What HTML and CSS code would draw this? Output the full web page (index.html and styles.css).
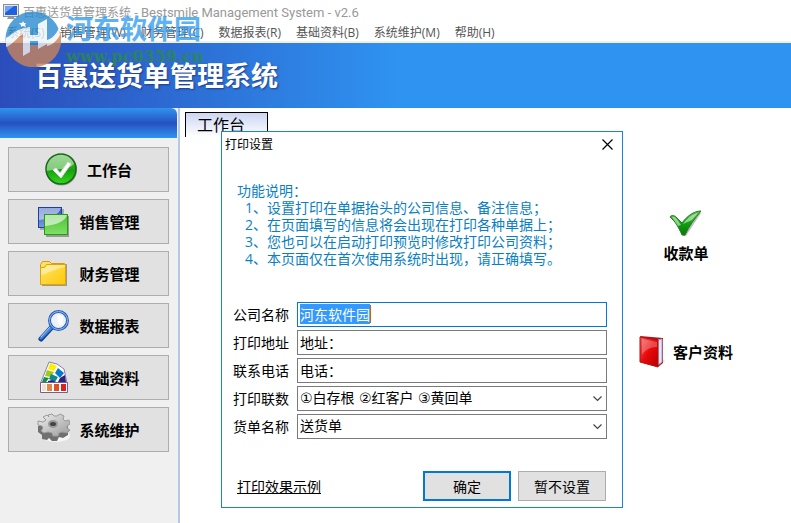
FILE: index.html
```html
<!DOCTYPE html>
<html lang="zh-CN">
<head>
    <meta charset="UTF-8">
    <meta name="viewport" content="width=device-width, initial-scale=1.0">
    <title>百惠送货单管理系统</title>
    <link rel="stylesheet" href="styles.css">
</head>
<body>

    <header class="titlebar">
        <svg class="app-icon" width="16" height="16" viewBox="0 0 16 16">
            <rect x="0.5" y="0.5" width="15" height="12" fill="#e8e8e0" stroke="#8a8f98"/>
            <rect x="2" y="2" width="12" height="9" fill="#1f5fe0"/>
            <path d="M2 2h9L2 9z" fill="#6ea4f8"/>
            <path d="M5 13h6l1 2H4z" fill="#9a9a92"/>
        </svg>
        <span>百惠送货单管理系统 <span class="latin">- Bestsmile Management System - v2.6</span></span>
    </header>

    <nav class="menubar">
        <a href="#">系统(S)</a>
        <a href="#">销售管理(W)</a>
        <a href="#">财务管理(C)</a>
        <a href="#">数据报表(R)</a>
        <a href="#">基础资料(B)</a>
        <a href="#">系统维护(M)</a>
        <a href="#">帮助(H)</a>
    </nav>

    <div class="banner">
        <h1>百惠送货单管理系统</h1>
    </div>

    <div class="watermark">
        <svg width="56" height="56" viewBox="0 0 56 56">
            <circle cx="28" cy="28" r="27.500" fill="#2a8cd0"/>
            <path d="M1 33C9 31 11 22 18 18V34H34V32C43 33 51 27 55 20A27.500 27.500 0 0 1 2 37z" fill="#c9845c"/>
            <path d="M1 27C6 24 12 17 25 16V41L18 45V23C13 25 9 33 1 36z" fill="#fff" opacity="0.9"/>
            <path d="M33 13L42 8V33L33 38V30H25V24H33z" fill="#fff" opacity="0.9"/>
            <path d="M42 29C48 27 51 23 54 17L55 24C52 30 47 34 42 35z" fill="#fff" opacity="0.9"/>
            <path d="M18 10l1 2h2l-1 2 1 2-3-1-2 1v-2l-2-2h3z" fill="#fff"/>
        </svg>
        <div>
            <div class="watermark-name">河东软件园</div>
            <div class="watermark-url">www.pc0359.cn</div>
        </div>
    </div>

    <div class="layout">
        <aside class="sidebar">
            <div class="sidebar-head"></div>
            <div class="sidebar-buttons">
                <button class="side-btn">
                    <svg width="33" height="33" viewBox="0 0 33 33">
                        <defs>
                            <linearGradient id="ball" x1="0" y1="0" x2="0" y2="1">
                                <stop offset="0" stop-color="#56b848"/>
                                <stop offset="0.55" stop-color="#17a00f"/>
                                <stop offset="1" stop-color="#35d81c"/>
                            </linearGradient>
                        </defs>
                        <circle cx="16.500" cy="17" r="15.500" fill="#999"/>
                        <circle cx="16" cy="16" r="15" fill="url(#ball)" stroke="#176b17" stroke-width="1.500"/>
                        <path d="M2 18A14 14 0 0 1 29 11C22 18 12 15 2 18z" fill="#fff" opacity="0.45"/>
                        <path d="M8 17l3-2 4 5 8-11 3 2-10 14z" fill="#fff" stroke="#ddd"/>
                    </svg>
                    工作台
                </button>
                <button class="side-btn">
                    <svg width="33" height="33" viewBox="0 0 33 33">
                        <defs>
                            <linearGradient id="blueBox" x1="0" y1="0" x2="0" y2="1">
                                <stop offset="0" stop-color="#2a55b5"/>
                                <stop offset="1" stop-color="#7c9ce0"/>
                            </linearGradient>
                            <linearGradient id="greenBox" x1="0" y1="0" x2="0" y2="1">
                                <stop offset="0" stop-color="#4cc030"/>
                                <stop offset="1" stop-color="#80e068"/>
                            </linearGradient>
                        </defs>
                        <rect x="3" y="4" width="24" height="21" fill="#aaa"/>
                        <rect x="1.500" y="2.500" width="23" height="20" fill="url(#blueBox)" stroke="#1a3fa5"/>
                        <path d="M2 3h22C22 10 12 14 2 15z" fill="#fff" opacity="0.5"/>
                        <rect x="9" y="11" width="23" height="21" fill="#999"/>
                        <rect x="7.500" y="9.500" width="23" height="20" fill="url(#greenBox)" stroke="#259c12"/>
                        <path d="M8 10h22C28 17 18 20 8 21z" fill="#fff" opacity="0.6"/>
                    </svg>
                    销售管理
                </button>
                <button class="side-btn">
                    <svg width="33" height="33" viewBox="0 0 33 33">
                        <defs>
                            <linearGradient id="folder" x1="0" y1="0" x2="1" y2="1">
                                <stop offset="0" stop-color="#ffe470"/>
                                <stop offset="1" stop-color="#ffc800"/>
                            </linearGradient>
                        </defs>
                        <path d="M5 7h25v22H5z" fill="#9a9a9a"/>
                        <path d="M3.500 27.500v-20l2-3h7l2 2h13v21z" fill="url(#folder)" stroke="#d69c0a"/>
                        <path d="M3.500 10.500h4l2-3h19v20h-25z" fill="url(#folder)" stroke="#e0a40a"/>
                        <path d="M4 11h4l2-3h18v2C18 12 12 16 4 18z" fill="#fff" opacity="0.4"/>
                    </svg>
                    财务管理
                </button>
                <button class="side-btn">
                    <svg width="33" height="33" viewBox="0 0 33 33">
                        <path d="M15 18L4 30" stroke="#15408c" stroke-width="5" stroke-linecap="round"/>
                        <path d="M15 18L4 29" stroke="#3d86e4" stroke-width="3" stroke-linecap="round"/>
                        <path d="M13 18L4 28" stroke="#a8d0ff"/>
                        <circle cx="21.500" cy="11.500" r="9" fill="#eef2f8" stroke="#2c60b8" stroke-width="3"/>
                        <circle cx="21.500" cy="11.500" r="9" fill="none" stroke="#8cbcf8"/>
                        <path d="M20 6l6 1v9l-5-1z" fill="#fff"/>
                    </svg>
                    数据报表
                </button>
                <button class="side-btn">
                    <svg width="33" height="33" viewBox="0 0 33 33">
                        <path d="M12 1l8 2 7 5 3 14v9H4V21z" fill="#fff" stroke="#8b80ad"/>
                        <path d="M13 2l7 3-3 5-6-2z" fill="#ffee00"/>
                        <path d="M10 9l7 2-3 5-6-1z" fill="#9ccc18"/>
                        <path d="M21 7l6 5-4 5-5-5z" fill="#0878c8"/>
                        <path d="M14 13l7 3-3 5-6-3z" fill="#10888c"/>
                        <path d="M7 16l5 1-3 4H5z" fill="#0a9240"/>
                        <path d="M23 17l5-3 1 7h-8z" fill="#30207c"/>
                        <path d="M11 20l4-1 4 2h-8z" fill="#282090"/>
                        <path d="M3.500 21.500h27v10h-27z" fill="#fff" stroke="#76608c"/>
                        <path d="M5 23h4v7H5z" fill="#f8ddd0"/>
                        <path d="M10 23h5v7h-5z" fill="#e08848"/>
                        <path d="M17 23h5v7h-5z" fill="#dc5028"/>
                        <path d="M24 23h5v7h-5z" fill="#dc2020"/>
                    </svg>
                    基础资料
                </button>
                <button class="side-btn">
                    <svg width="33" height="33" viewBox="0 0 33 33">
                        <defs>
                            <linearGradient id="gear" x1="0" y1="0" x2="1" y2="1">
                                <stop offset="0" stop-color="#f0f0f0"/>
                                <stop offset="1" stop-color="#9a9a9a"/>
                            </linearGradient>
                        </defs>
                        <ellipse cx="19" cy="23" rx="14" ry="6" fill="#fff" opacity="0.7"/>
                        <path d="M1 13v6l4 3v4l5 1 2-2 3 3h5l2-4 4 1 5-3v-9z" fill="#707070"/>
                        <path d="M12 4l-1-2 4-1 2 2h3l3-2 4 2-1 3 2 2 4-1 1 4-3 2v2l3 2-3 3-5-1-3 1-1 3h-5l-1-3-4-1-4 1-3-2 2-3-1-2-4-1V8l5 1 3-2-3-3 4-2z" fill="url(#gear)" stroke="#999"/>
                        <ellipse cx="16" cy="11" rx="4" ry="3" fill="#444" stroke="#999" stroke-width="2"/>
                    </svg>
                    系统维护
                </button>
            </div>
        </aside>

        <main class="workspace">
            <div class="tab">工作台</div>
            <div class="shortcuts">
                <a class="shortcut shortcut-top" href="#">
                    <svg width="34" height="28" viewBox="0 0 34 28">
                        <defs>
                            <linearGradient id="tick" x1="0" y1="0" x2="0" y2="1">
                                <stop offset="0" stop-color="#58c84c"/>
                                <stop offset="0.5" stop-color="#12a010"/>
                                <stop offset="1" stop-color="#087808"/>
                            </linearGradient>
                        </defs>
                        <path d="M3 9l4-1 7 8L30 3l2 1-15 23h-3z" fill="#bbb"/>
                        <path d="M1 8c1-2 4-2 6 0l6 6C18 7 25 2 32 2 26 9 20 17 16 26h-3C10 19 7 13 1 8z" fill="url(#tick)" stroke="#267c24"/>
                        <path d="M3 8c3-1 5 2 9 8l-3 1zM14 15C19 8 24 5 29 4l-6 7z" fill="#fff" opacity="0.5"/>
                    </svg>
                    收款单
                </a>
                <a class="shortcut" href="#">
                    <svg width="26" height="33" viewBox="0 0 26 33">
                        <defs>
                            <linearGradient id="book" x1="0" y1="0" x2="1" y2="1">
                                <stop offset="0" stop-color="#f06060"/>
                                <stop offset="0.5" stop-color="#e80808"/>
                                <stop offset="1" stop-color="#b80000"/>
                            </linearGradient>
                        </defs>
                        <path d="M22 29l4-3-3-3z" fill="#ddd"/>
                        <path d="M1 1l23 2v25l-5 4z" fill="#b81018"/>
                        <path d="M19 5l4-1v23l-4 3z" fill="#dfe6fa" stroke="#a8a8c8"/>
                        <path d="M1 2l18 3v27L1 27z" fill="url(#book)" stroke="#b01010"/>
                        <path d="M3 4l15 3v5C10 12 5 16 3 20z" fill="#fff" opacity="0.25"/>
                    </svg>
                    客户资料
                </a>
            </div>
        </main>
    </div>

    <section class="dialog" role="dialog" aria-labelledby="dialog-title">
        <div class="dialog-head">
            <h2 id="dialog-title">打印设置</h2>
            <button class="close-btn" aria-label="关闭">
                <svg width="11" height="11" viewBox="0 0 11 11">
                    <path d="M0.500 0.500l10 10M10.500 0.500l-10 10" stroke="#000" stroke-width="1.200"/>
                </svg>
            </button>
        </div>

        <div class="notes">
            <p>功能说明：</p>
            <ul>
                <li>1、设置打印在单据抬头的公司信息、备注信息；</li>
                <li>2、在页面填写的信息将会出现在打印各种单据上；</li>
                <li>3、您也可以在启动打印预览时修改打印公司资料；</li>
                <li>4、本页面仅在首次使用系统时出现，请正确填写。</li>
            </ul>
        </div>

        <form class="form">
            <div class="row">
                <label for="company">公司名称</label>
                <div class="field">
                    <input class="active" type="text" id="company" value="河东软件园">
                    <span class="caret"></span>
                </div>
            </div>
            <div class="row">
                <label for="address">打印地址</label>
                <div class="field"><input type="text" id="address" value="地址："></div>
            </div>
            <div class="row">
                <label for="phone">联系电话</label>
                <div class="field"><input type="text" id="phone" value="电话："></div>
            </div>
            <div class="row">
                <label for="copies">打印联数</label>
                <div class="field">
                    <select id="copies"><option>①白存根 ②红客户 ③黄回单</option></select>
                    <svg class="arrow" width="9" height="6" viewBox="0 0 9 6"><path d="M0.500 0.500l4 4 4-4" fill="none" stroke="#444" stroke-width="1.200"/></svg>
                </div>
            </div>
            <div class="row">
                <label for="bill">货单名称</label>
                <div class="field">
                    <select id="bill"><option>送货单</option></select>
                    <svg class="arrow" width="9" height="6" viewBox="0 0 9 6"><path d="M0.500 0.500l4 4 4-4" fill="none" stroke="#444" stroke-width="1.200"/></svg>
                </div>
            </div>
        </form>

        <div class="actions">
            <a href="#">打印效果示例</a>
            <button class="btn btn-default">确定</button>
            <button class="btn">暂不设置</button>
        </div>
    </section>

    <script>
        const company = document.getElementById("company");
        company.focus();
        company.select();
    </script>

</body>
</html>
```

FILE: styles.css
```css
* {
    box-sizing: border-box;
}

body {
    margin: 0;
    min-height: 100vh;
    display: flex;
    flex-direction: column;
    background: white;
    color: black;
    font-family: "Open Sans", "Noto Sans CJK SC", sans-serif;
    font-size: 14px;
}

a {
    color: inherit;
    text-decoration: none;
}

button, input, select {
    font: inherit;
    color: inherit;
}

svg {
    flex: none;
}

.titlebar {
    display: flex;
    align-items: center;
    gap: 4px;
    height: 23px;
    padding-left: 3px;
    font-size: 12px;
    color: #999;
    white-space: nowrap;
}

.titlebar .latin {
    font-family: Roboto, sans-serif;
    font-size: 13px;
}

.menubar {
    display: flex;
    gap: 15px;
    height: 20px;
    padding-left: 7px;
    border-bottom: 2px solid #f0f0f0;
    font-size: 12px;
    line-height: 19px;
    color: #555;
    white-space: nowrap;
}

.banner {
    display: flex;
    align-items: center;
    height: 65px;
    padding-left: 35px;
    background: linear-gradient(to right, #2b4dbb, #2f93f1 400px);
}

.banner h1 {
    margin: 0;
    font-size: 27px;
    line-height: 32px;
    color: white;
    text-shadow: 1px 1px 2px #1c3c88;
    white-space: nowrap;
}

/* site mark floating over the header */
.watermark {
    position: absolute;
    left: 5px;
    top: 11px;
    display: flex;
    gap: 5px;
    opacity: 0.8;
    pointer-events: none;
}

.watermark-name {
    font-size: 27px;
    font-weight: bold;
    line-height: 36px;
    color: #36a0f0;
}

.watermark-url {
    font-family: "DejaVu Serif", serif;
    font-size: 16px;
    font-weight: bold;
    line-height: 20px;
    color: #2c8a48;
}

.layout {
    flex: 1;
    display: flex;
}

.sidebar {
    width: 180px;
    flex: none;
    background: #f0f0f0;
    border-right: 2px solid #b4c8e8;
}

.sidebar-head {
    height: 30px;
    margin-right: 1px;
    border-top-right-radius: 6px;
    background: linear-gradient(#2f94f0, #2850c0 50%, #2f94f0);
}

.sidebar-buttons {
    display: flex;
    flex-direction: column;
    gap: 7px;
    padding: 9px 9px 9px 8px;
}

.side-btn {
    display: flex;
    justify-content: center;
    align-items: center;
    gap: 9px;
    height: 45px;
    padding: 0;
    background: #e1e1e1;
    border: 1px solid #adadad;
    font-size: 15px;
    font-weight: bold;
}

.workspace {
    flex: 1;
    display: flex;
    flex-direction: column;
    align-items: flex-start;
    padding: 4px 58px 0 5px;
}

.tab {
    width: 83px;
    height: 25px;
    padding-left: 11px;
    border: 1px solid black;
    border-bottom: none;
    background: linear-gradient(#ccd6f2, white);
    font-size: 16px;
    line-height: 24px;
}

.shortcuts {
    display: flex;
    flex-direction: column;
    align-items: center;
    align-self: flex-end;
    gap: 72px;
    margin-top: 72px;
    font-size: 15px;
    font-weight: bold;
    line-height: 20px;
}

.shortcut {
    display: flex;
    align-items: center;
    gap: 8px;
}

.shortcut-top {
    flex-direction: column;
    gap: 6px;
}

/* print settings window */
.dialog {
    position: absolute;
    left: 221px;
    top: 131px;
    width: 402px;
    padding-bottom: 6px;
    background: white;
    border: 1px solid #1883d7;
}

.dialog-head {
    display: flex;
    justify-content: space-between;
    align-items: center;
    height: 24px;
    padding: 0 9px 0 3px;
}

.dialog-head h2 {
    margin: 0;
    font-size: 12px;
    font-weight: normal;
}

.close-btn {
    display: flex;
    padding: 0;
    background: none;
    border: none;
}

.notes {
    padding: 26px 15px 0 15px;
    line-height: 17px;
    color: #0a80c4;
}

.notes p {
    margin: 0;
}

.notes ul {
    margin: 0;
    padding-left: 8px;
    list-style: none;
}

.form {
    display: flex;
    flex-direction: column;
    gap: 3px;
    padding: 35px 15px 0 11px;
}

.row {
    display: flex;
    align-items: center;
}

.row label {
    width: 64px;
    line-height: 20px;
}

.field {
    position: relative;
    flex: 1;
}

.field input,
.field select {
    display: block;
    width: 100%;
    height: 25px;
    padding: 0 2px 2px;
    background: white;
    border: 1px solid #7a7a7a;
    border-radius: 0;
    outline: none;
    appearance: none;
}

.field select {
    font-family: "DejaVu Sans", "Noto Sans CJK SC", sans-serif;
}

.field .active {
    border-color: #0078d7;
}

.field input::selection {
    background: #3399ff;
    color: white;
}

.caret {
    position: absolute;
    left: 73px;
    top: 3px;
    width: 1px;
    height: 18px;
    background: #cc6600;
}

.arrow {
    position: absolute;
    right: 5px;
    top: 10px;
    pointer-events: none;
}

.actions {
    display: flex;
    align-items: center;
    gap: 7px;
    padding: 32px 16px 0 15px;
}

.actions a {
    margin-right: auto;
    text-decoration: underline;
}

.btn {
    width: 88px;
    height: 30px;
    padding: 0;
    background: #e1e1e1;
    border: 1px solid #adadad;
}

.btn-default {
    border: 2px solid #0078d7;
}
```
